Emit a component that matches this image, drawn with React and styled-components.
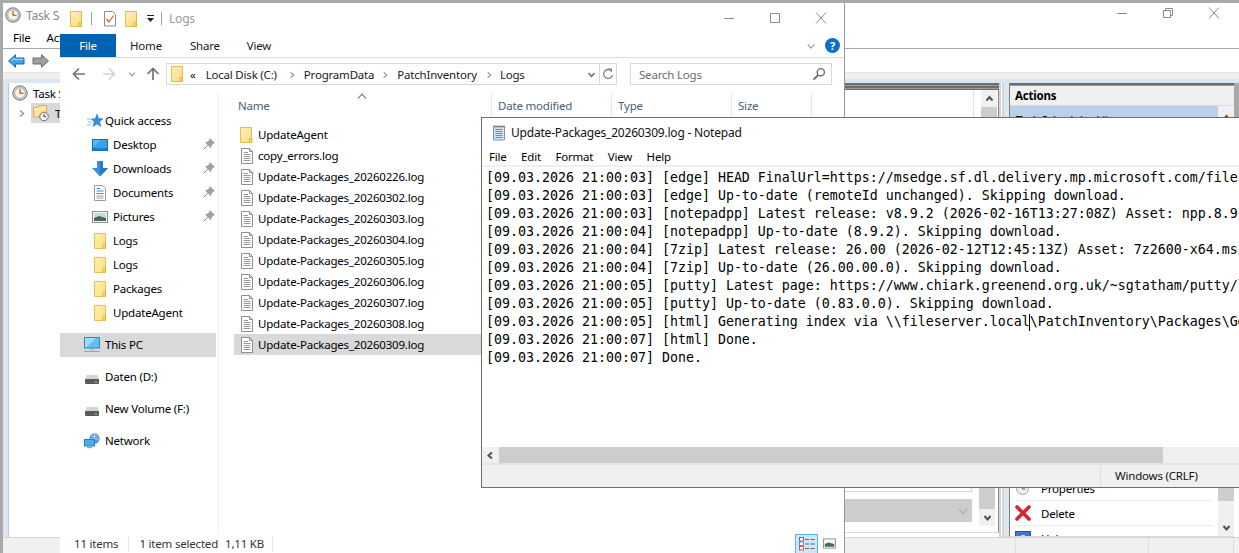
import React from 'react';
import styled, { createGlobalStyle } from 'styled-components';

const GlobalStyle = createGlobalStyle`
  html, body {
    margin: 0;
    padding: 0;
    background: #a9a9a9;
    overflow: hidden;
  }
  * {
    box-sizing: border-box;
  }
`;

const uiFont = `"Noto Sans", "Open Sans", sans-serif`;

const Desktop = styled.div`
  position: relative;
  width: 1239px;
  height: 553px;
  overflow: hidden;
  background: #a9a9a9;
  font-family: ${uiFont};
  font-size: 11.5px;
  letter-spacing: -0.2px;
  color: #000;
`;

/* ---------- Task Scheduler (back window) ---------- */

const SchedulerWindow = styled.div`
  position: absolute;
  left: 3px;
  top: 3px;
  width: 1236px;
  height: 550px;
  background: #fff;
  display: flex;
  flex-direction: column;
`;

const SchedulerTitle = styled.div`
  height: 24px;
  display: flex;
  align-items: center;
  padding-left: 2px;
  gap: 5px;
  color: #8a8a8a;
  font-size: 12px;
`;

const SchedulerMenu = styled.div`
  height: 22px;
  display: flex;
  align-items: center;
  gap: 16px;
  padding-left: 10px;
  border-bottom: 1px solid #a6a6a6;
`;

const SchedulerTools = styled.div`
  height: 23px;
  display: flex;
  align-items: center;
  gap: 7px;
  padding-left: 5px;
`;

const ToolSeparator = styled.span`
  width: 1px;
  height: 18px;
  margin-left: 5px;
  background: #a0a0a0;
`;

const LightStrip = styled.div`
  height: 7px;
  background: #f0f0f0;
  border-top: 1px solid #e3e3e3;
`;

const Workspace = styled.div`
  flex: 1;
  min-height: 0;
  display: flex;
  background: #dbe6f1;
  padding: 4px 0 0 5px;
`;

const TreePane = styled.div`
  width: 196px;
  background: #fff;
  flex: none;
  border-left: 1px solid #c8c8c8;
`;

const TreeRow = styled.div`
  height: 20px;
  display: flex;
  align-items: center;
  gap: 5px;
  padding-left: ${(p) => p.$indent}px;
`;

const TreeSelected = styled.span`
  display: flex;
  align-items: center;
  gap: 6px;
  height: 20px;
  flex: 1;
  padding-left: 2px;
  background: #d9d9d9;
`;

const CenterPane = styled.div`
  width: 800px;
  flex: none;
  display: flex;
  flex-direction: column;
  background: #fff;
  border-right: 5px double #d4d4d4;
`;

const Stripes = styled.div`
  height: ${(p) => p.$h}px;
  flex: none;
  background: repeating-linear-gradient(#6d6d6d 0 2px, #9a9a9a 2px 3px);
`;

const CenterBody = styled.div`
  flex: 1;
  min-height: 0;
  display: flex;
  flex-direction: column;
  border-right: 1px solid #8c8c8c;
  margin-bottom: 4px;
  border-bottom: 1px solid #dcdcdc;
`;

const UpperPane = styled.div`
  height: 200px;
  flex: none;
  display: flex;
`;

const ListColumn = styled.div`
  flex: 1;
  margin-right: 7px;
  border-right: 1px solid #e3e3e3;
`;

const LowerPane = styled.div`
  flex: 1;
  min-height: 0;
  display: flex;
  padding-bottom: 6px;
`;

const LowerContent = styled.div`
  flex: 1;
  display: flex;
  flex-direction: column;
  justify-content: flex-end;
  padding: 0 7px 4px 0;
`;

const GrayBox = styled.div`
  height: 5px;
  border: 1px solid #d8d8d8;
  border-top: none;
  background: #fff;
  margin-bottom: 7px;
`;

const GrayDropdown = styled.div`
  height: 23px;
  background: #cdcdcd;
  display: flex;
  align-items: center;
  justify-content: flex-end;
  padding-right: 3px;
`;

const VScroll = styled.div`
  width: 16px;
  flex: none;
  display: flex;
  flex-direction: column;
  background: #f0f0f0;
  margin-right: ${(p) => p.$right || 0}px;
`;

const ScrollButton = styled.div`
  height: ${(p) => p.$h || 17}px;
  flex: none;
  display: flex;
  align-items: center;
  justify-content: center;
`;

const ScrollThumb = styled.div`
  flex: 1;
  background: #cdcdcd;
  margin-bottom: ${(p) => p.$bottom || 0}px;
`;

const ActionsPane = styled.div`
  width: 225px;
  flex: none;
  margin-left: 5px;
  display: flex;
  flex-direction: column;
  background: #fff;
  border-left: 1px solid #7f7f7f;
  border-bottom: 1px solid #dcdcdc;
  overflow: hidden;
`;

const EdgeStrip = styled.div`
  flex: 1;
  background: linear-gradient(#a9a9a9 35px, #fff 35px);
`;

const ActionsHeader = styled.div`
  height: 20px;
  flex: none;
  background: #f0f0f0;
  font-weight: 700;
  display: flex;
  align-items: center;
  padding-left: 5px;
  border-bottom: 1px solid #d8d8d8;
`;

const ActionsBody = styled.div`
  flex: 1;
  min-height: 0;
  display: flex;
`;

const ActionsList = styled.div`
  flex: 1;
  min-width: 0;
  display: flex;
  flex-direction: column;
  overflow: hidden;
`;

const ActionsSelected = styled.div`
  height: 26px;
  flex: none;
  background: #b8d1e8;
  padding-left: 6px;
  display: flex;
  align-items: center;
`;

const ActionsSpacer = styled.div`
  flex: 1;
`;

const ActionRow = styled.div`
  height: 25px;
  flex: none;
  display: flex;
  align-items: center;
  gap: 10px;
  margin: 0 6px 0 5px;
  border-bottom: 1px solid #ececec;
  &:last-child {
    border-bottom: none;
    margin-bottom: -15px;
  }
`;

const SchedulerStatus = styled.div`
  height: 16px;
  flex: none;
  display: flex;
  justify-content: flex-end;
  background: #f0f0f0;
  border-top: 1px solid #d4d4d4;
  padding-right: 5px;
`;

const StatusCell = styled.div`
  width: ${(p) => p.$w}px;
  border-left: 1px solid #dcdcdc;
  &:last-child {
    border-right: 1px solid #dcdcdc;
  }
`;

const WindowControls = styled.div`
  position: absolute;
  top: ${(p) => p.$top}px;
  right: ${(p) => p.$right}px;
  display: flex;
  gap: 30px;
`;

/* ---------- Explorer ---------- */

const ExplorerWindow = styled.div`
  position: absolute;
  left: 60px;
  top: 3px;
  width: 785px;
  height: 550px;
  background: #fff;
  border-right: 1px solid #989898;
  display: flex;
  flex-direction: column;
`;

const ExplorerTitle = styled.div`
  height: 31px;
  flex: none;
  display: flex;
  align-items: center;
  padding-left: 10px;
`;

const TitleSeparator = styled.span`
  width: 1px;
  height: 13px;
  background: #a0a0a0;
  margin: 0 ${(p) => p.$after}px 0 ${(p) => p.$before}px;
`;

const TitleGap = styled.span`
  width: ${(p) => p.$w}px;
  flex: none;
`;

const FadedTitle = styled.span`
  color: #9a9a9a;
  font-size: 12px;
`;

const RibbonTabs = styled.div`
  position: relative;
  height: 24px;
  flex: none;
  display: flex;
  align-items: stretch;
  border-bottom: 1px solid #dadada;
`;

const FileTab = styled.div`
  width: 56px;
  height: 23px;
  background: #0063b1;
  color: #fff;
  display: flex;
  align-items: center;
  justify-content: center;
`;

const RibbonTab = styled.div`
  display: flex;
  align-items: center;
  height: 23px;
  margin-left: ${(p) => p.$left}px;
  color: #1a1a1a;
`;

const RibbonRight = styled.div`
  position: absolute;
  right: 4px;
  top: 4px;
  display: flex;
  align-items: center;
  gap: 9px;
`;

const HelpDot = styled.span`
  width: 15px;
  height: 15px;
  border-radius: 50%;
  background: #0a6fc9;
  color: #fff;
  font-weight: 700;
  font-size: 11px;
  letter-spacing: 0;
  display: flex;
  align-items: center;
  justify-content: center;
`;

const AddressRow = styled.div`
  height: 35px;
  flex: none;
  display: flex;
  align-items: center;
  padding: 0 12px 3px 12px;
`;

const NavSlot = styled.span`
  width: ${(p) => p.$w}px;
  flex: none;
  display: flex;
  align-items: center;
`;

const AddressBox = styled.div`
  width: 451px;
  height: 22px;
  flex: none;
  border: 1px solid #d9d9d9;
  display: flex;
  align-items: center;
  padding-left: 4px;
  color: #1a1a1a;
`;

const Crumb = styled.span`
  margin-left: ${(p) => p.$left || 0}px;
`;

const AddressEnd = styled.div`
  margin-left: auto;
  height: 100%;
  display: flex;
  align-items: center;
  gap: 3px;
`;

const RefreshCell = styled.span`
  width: 17px;
  height: 100%;
  display: flex;
  align-items: center;
  justify-content: center;
  border-left: 1px solid #d9d9d9;
`;

const SearchBox = styled.div`
  width: 202px;
  height: 22px;
  flex: none;
  margin-left: 13px;
  border: 1px solid #d9d9d9;
  display: flex;
  align-items: center;
  justify-content: space-between;
  padding: 0 5px 0 8px;
  color: #6d6d6d;
`;

const ExplorerMain = styled.div`
  flex: 1;
  min-height: 0;
  display: flex;
`;

const Sidebar = styled.div`
  width: 159px;
  flex: none;
  padding-top: 16px;
  border-right: 1px solid #f0f0f0;
  display: flex;
  flex-direction: column;
  gap: 8px;
`;

const NavGroup = styled.div`
  display: flex;
  flex-direction: column;
`;

const NavRow = styled.div`
  position: relative;
  height: 24px;
  display: flex;
  align-items: center;
  gap: ${(p) => p.$gap}px;
  padding-left: ${(p) => p.$indent}px;
  padding-bottom: 2px;
  margin-right: 2px;
  background: ${(p) => (p.$selected ? '#d9d9d9' : 'transparent')};
`;

const NavIcon = styled.span`
  width: 16px;
  flex: none;
  padding-top: 2px;
  display: flex;
  align-items: center;
  justify-content: center;
`;

const NavPin = styled.span`
  position: absolute;
  right: 1px;
  top: 5px;
  display: flex;
`;

const FilePane = styled.div`
  flex: 1;
  min-width: 0;
  display: flex;
  flex-direction: column;
`;

const HeaderRow = styled.div`
  height: 24px;
  flex: none;
  display: flex;
`;

const HeaderCell = styled.div`
  position: relative;
  width: ${(p) => p.$w}px;
  flex: none;
  padding-left: ${(p) => p.$pad}px;
  padding-top: 5px;
  color: #4c607a;
  border-right: 1px solid #e5e5e5;
`;

const SortCaret = styled.span`
  position: absolute;
  left: 137px;
  top: -3px;
  display: flex;
`;

const FileList = styled.div`
  padding: 7px 0 0 15px;
  display: flex;
  flex-direction: column;
`;

const FileRow = styled.div`
  height: 21px;
  width: 260px;
  display: flex;
  align-items: center;
  gap: 4px;
  padding-left: 6px;
  background: ${(p) => (p.$selected ? '#d9d9d9' : 'transparent')};
`;

const ExplorerStatus = styled.div`
  height: 20px;
  flex: none;
  display: flex;
  align-items: center;
  color: #333;
  padding-left: 14px;
  padding-top: 1px;
  position: relative;
`;

const StatusDivider = styled.span`
  width: 1px;
  height: 14px;
  background: #e3e3e3;
  margin: 0 ${(p) => p.$after}px 0 ${(p) => p.$before}px;
`;

const ViewButtons = styled.div`
  margin-left: auto;
  margin-right: 7px;
  height: 20px;
  display: flex;
  align-items: center;
  gap: 4px;
`;

const ViewButton = styled.span`
  width: ${(p) => p.$w}px;
  height: 20px;
  display: flex;
  align-items: center;
  justify-content: center;
  background: ${(p) => (p.$active ? '#cce8ff' : 'transparent')};
  border: 1px solid ${(p) => (p.$active ? '#58b4e4' : 'transparent')};
`;

/* ---------- Notepad (front window) ---------- */

const NotepadWindow = styled.div`
  position: absolute;
  left: 481px;
  top: 117px;
  width: 760px;
  height: 371px;
  background: #fff;
  border: 1px solid #6e6e6e;
  display: flex;
  flex-direction: column;
`;

const NotepadTitle = styled.div`
  height: 29px;
  flex: none;
  display: flex;
  align-items: center;
  gap: 4px;
  padding-left: 9px;
  font-size: 12px;
  color: #111;
`;

const NotepadMenu = styled.div`
  height: 20px;
  flex: none;
  display: flex;
  align-items: center;
  gap: 14.5px;
  padding-left: 7px;
  border-bottom: 2px solid #f0f0f0;
`;

const TextArea = styled.div`
  position: relative;
  flex: 1;
  min-height: 0;
  padding: 2px 0 0 4px;
  overflow: hidden;
`;

const LogLine = styled.div`
  height: 18px;
  line-height: 18px;
  font-family: "DejaVu Sans Mono", "Liberation Mono", monospace;
  font-size: 13.29px;
  letter-spacing: 0;
  white-space: pre;
  color: #000;
`;

const TextCursor = styled.span`
  position: absolute;
  left: 547px;
  top: 147px;
  width: 1px;
  height: 17px;
  background: #000;
`;

const HScroll = styled.div`
  height: 16px;
  flex: none;
  display: flex;
  background: #f0f0f0;
`;

const HScrollButton = styled.div`
  width: 17px;
  display: flex;
  align-items: center;
  justify-content: center;
`;

const HScrollThumb = styled.div`
  width: 664px;
  background: #cdcdcd;
`;

const NotepadStatus = styled.div`
  height: 24px;
  flex: none;
  display: flex;
  justify-content: flex-end;
  background: #f0f0f0;
  border-top: 2px solid #e4e4e4;
`;

const NotepadStatusCell = styled.div`
  width: 140px;
  flex: none;
  height: 20px;
  margin-top: 1px;
  padding: 0 0 2px 14px;
  border-left: 1px solid #dcdcdc;
  display: flex;
  align-items: center;
  color: #111;
`;

/* ---------- Icons ---------- */

const FolderIcon = () => (
  <svg width="14" height="16" viewBox="0 0 14 16">
    <defs>
      <linearGradient id="folderFill" x1="0" y1="0" x2="1" y2="1">
        <stop offset="0" stopColor="#fff0b8" />
        <stop offset="1" stopColor="#fbdc7c" />
      </linearGradient>
    </defs>
    <path d="M.5 .5H11.5V15.5H.5Z" fill="url(#folderFill)" stroke="#e6bd52" />
    <path d="M9.5 11.5H12V15.5H9.5Z" fill="#f7d56c" stroke="#dcae40" strokeWidth=".8" />
  </svg>
);

const SmallFolderIcon = () => (
  <svg width="12" height="16" viewBox="0 0 12 16">
    <path d="M.5 .5H11.5V15.5H.5Z" fill="url(#folderFill)" stroke="#e6bd52" />
    <path d="M9 11.5H11.5V15.5H9Z" fill="#f7d56c" stroke="#dcae40" strokeWidth=".8" />
  </svg>
);

const DocIcon = () => (
  <svg width="14" height="16" viewBox="0 0 14 16">
    <path d="M1.5 .5H9.5L12.5 3.5V15.5H1.5Z" fill="#fff" stroke="#8f8f8f" />
    <path d="M9.5 .5V3.5H12.5" fill="none" stroke="#8f8f8f" />
    <path d="M3.5 4.5H8M3.5 6.5H10.5M3.5 8.5H10.5M3.5 10.5H10.5M3.5 12.5H10.5" stroke="#9a9a9a" />
  </svg>
);

const ClockIcon = ({ size = 16 }) => (
  <svg width={size} height={size} viewBox="0 0 16 16">
    <circle cx="8" cy="8" r="7.2" fill="#c9ccd2" stroke="#77797f" />
    <circle cx="8" cy="8" r="5.2" fill="#fbf3dc" stroke="#9a9a9a" strokeWidth=".6" />
    <path d="M8 4V8.3H11.5" fill="none" stroke="#7a5c2c" strokeWidth="1.1" />
  </svg>
);

const FolderClockIcon = () => (
  <svg width="16" height="18" viewBox="0 0 16 18">
    <path d="M.5 3.5H5L6 1.5H13.5V13H.5Z" fill="#fbe39a" stroke="#d6ae52" />
    <path d="M1 5H13" stroke="#fff6d0" />
    <circle cx="11" cy="12.5" r="4.3" fill="#eef0f2" stroke="#6d7078" />
    <path d="M11 10V12.7H13" fill="none" stroke="#444" />
  </svg>
);

const BlueArrow = () => (
  <svg width="17" height="14" viewBox="0 0 17 14">
    <path d="M.5 7L7.5 .7V4H16V10H7.5V13.3Z" fill="#3ea2e8" stroke="#1b6fb5" />
    <path d="M3 7L7 4V5.5H15" fill="none" stroke="#a6dcfb" />
  </svg>
);

const GrayArrow = () => (
  <svg width="17" height="14" viewBox="0 0 17 14">
    <path d="M16.5 7L9.5 .7V4H1V10H9.5V13.3Z" fill="#a0a0a0" stroke="#6a6a6a" />
  </svg>
);

const Chevron = ({ dir = 'up', color = '#505050', size = 9, weight = 2 }) => {
  const d = {
    up: 'M1.5 6.5L4.5 3L7.5 6.5',
    down: 'M1.5 3L4.5 6.5L7.5 3',
    left: 'M6 1.5L2.5 4.5L6 7.5',
    right: 'M3 1.5L6.5 4.5L3 7.5',
  }[dir];
  return (
    <svg width={size} height={size} viewBox="0 0 9 9">
      <path d={d} fill="none" stroke={color} strokeWidth={weight} />
    </svg>
  );
};

const MinIcon = () => (
  <svg width="16" height="12" viewBox="0 0 16 12">
    <path d="M3 6.5H13" stroke="#8c8c8c" />
  </svg>
);

const MaxIcon = () => (
  <svg width="16" height="12" viewBox="0 0 16 12">
    <path d="M3.5 1.5H12.5V10.5H3.5Z" fill="none" stroke="#8c8c8c" />
  </svg>
);

const RestoreIcon = () => (
  <svg width="16" height="12" viewBox="0 0 16 12">
    <path d="M3.5 3.5H10.5V10.5H3.5ZM5.5 3.5V1.5H12.5V8.5H10.5" fill="none" stroke="#8c8c8c" />
  </svg>
);

const CloseIcon = () => (
  <svg width="16" height="12" viewBox="0 0 16 12">
    <path d="M3 .5L13 11.5M13 .5L3 11.5" stroke="#8c8c8c" />
  </svg>
);

const CheckDocIcon = () => (
  <svg width="14" height="17" viewBox="0 0 14 17">
    <path d="M1.5 1.5H9.5L12.5 4.5V16H1.5Z" fill="#fff" stroke="#8c8c8c" />
    <path d="M3.5 9L6 12L10.5 5.5" fill="none" stroke="#d9622b" strokeWidth="1.3" />
  </svg>
);

const QatDropdown = () => (
  <svg width="9" height="9" viewBox="0 0 9 9">
    <path d="M1 1.5H8" stroke="#222" />
    <path d="M1 4H8L4.5 8Z" fill="#222" />
  </svg>
);

const NavArrow = ({ flip, color }) => (
  <svg width="14" height="14" viewBox="0 0 14 14" style={flip ? { transform: 'scaleX(-1)' } : undefined}>
    <path d="M13 7H2M7 1.5L1.5 7L7 12.5" fill="none" stroke={color} strokeWidth="1.7" />
  </svg>
);

const UpArrow = () => (
  <svg width="14" height="14" viewBox="0 0 14 14">
    <path d="M7 13V2M1.5 7L7 1.5L12.5 7" fill="none" stroke="#737373" strokeWidth="1.7" />
  </svg>
);

const RefreshIcon = () => (
  <svg width="12" height="14" viewBox="0 0 12 14">
    <path d="M9.5 4A4.5 4.5 0 1 0 10.5 8" fill="none" stroke="#777" strokeWidth="1.2" />
    <path d="M6 1.5L9.8 1.5V5.2Z" fill="#777" />
  </svg>
);

const SearchIcon = () => (
  <svg width="14" height="14" viewBox="0 0 14 14">
    <circle cx="8.8" cy="5.2" r="3.6" fill="none" stroke="#6d6d6d" strokeWidth="1.4" />
    <path d="M6.2 8L1.5 12.7" stroke="#6d6d6d" strokeWidth="1.8" />
  </svg>
);

const StarIcon = () => (
  <svg width="16" height="16" viewBox="0 0 16 16">
    <path d="M10 1L11.6 5.6L16 5.8L12.6 8.8L14 13.6L10 10.9L6 13.6L7.2 8.8L4.2 6L8.4 5.6Z" fill="#2f8fe0" stroke="#1f74c4" strokeWidth=".5" />
    <path d="M0 6H4M1 9H5M0 12H4" stroke="#7cc0f2" />
  </svg>
);

const DesktopIcon = () => (
  <svg width="16" height="12" viewBox="0 0 16 12">
    <rect x=".5" y=".5" width="15" height="11" fill="#33a3ee" stroke="#0e6fbe" />
    <path d="M1 10H15" stroke="#0e5fa8" />
    <path d="M1 8L9 1H1Z" fill="#58bbf6" />
  </svg>
);

const DownloadIcon = () => (
  <svg width="16" height="16" viewBox="0 0 16 16">
    <path d="M5 0H11V7H16L8 15.5L0 7H5Z" fill="#3b8fe0" />
    <path d="M8 0H11V7H16L8 15.5Z" fill="#2a78cb" />
  </svg>
);

const DocumentsIcon = () => (
  <svg width="12" height="16" viewBox="0 0 12 16">
    <path d="M.5 .5H8.5L11.5 3.5V15.5H.5Z" fill="#fff" stroke="#9a9a9a" />
    <path d="M2.5 3.5H6M2.5 6H9.5M2.5 8.5H9.5" stroke="#3d8ed6" />
    <path d="M2.5 11H9.5M2.5 13H9.5" stroke="#9a9a9a" />
  </svg>
);

const PicturesIcon = () => (
  <svg width="16" height="12" viewBox="0 0 16 12">
    <rect x=".5" y=".5" width="15" height="11" fill="#f4f6f8" stroke="#8f8f8f" />
    <rect x="2" y="2" width="12" height="8" fill="#c4dbe8" />
    <path d="M2 7L7 5L14 7V10H2Z" fill="#4a6b4e" />
  </svg>
);

const PinIcon = () => (
  <svg width="12" height="12" viewBox="0 0 12 12">
    <path d="M7 .5L11.5 5L9.8 5.6L7.8 8.6L7.6 10L2.6 4.6L4 4.2L6.6 2.2Z" fill="#9aa0a6" stroke="#84898f" strokeWidth=".5" />
    <path d="M4.5 7.5L.8 11.2" stroke="#84898f" />
  </svg>
);

const ThisPcIcon = () => (
  <svg width="16" height="16" viewBox="0 0 16 16">
    <rect x=".5" y=".5" width="15" height="10.5" fill="#5cc0f5" stroke="#3a84b8" />
    <path d="M1 1H12L3 10H1Z" fill="#9adcfb" />
    <path d="M6 11.5H10V13H6Z" fill="#9fb4c4" />
    <path d="M0 14.5H16" stroke="#8aa7bf" />
  </svg>
);

const DriveIcon = () => (
  <svg width="14" height="16" viewBox="0 0 14 16">
    <path d="M1.5 6H12.5L14 10H0Z" fill="#d4d4d4" />
    <rect x="0" y="10" width="14" height="5" rx="1" fill="#5a5a5a" />
    <rect x="10" y="12" width="2" height="1.5" fill="#5fd35f" />
  </svg>
);

const NetworkIcon = () => (
  <svg width="16" height="16" viewBox="0 0 16 16">
    <circle cx="10.5" cy="5.5" r="5.2" fill="#5d9bd6" />
    <path d="M7 2.5C9 4 12 4 14.5 2.5M6 6H15M10.5 .5V10.5" stroke="#cfe5f7" strokeWidth=".7" fill="none" />
    <rect x=".5" y="6.5" width="10" height="6.5" fill="#42b0ee" stroke="#2b7eb8" />
    <path d="M3 14.5H8" stroke="#8aa7bf" strokeWidth="1.4" />
  </svg>
);

const DeleteIcon = () => (
  <svg width="16" height="16" viewBox="0 0 16 16">
    <path d="M2 2L14 14M14 2L2 14" stroke="#d7262c" strokeWidth="3.6" strokeLinecap="round" />
  </svg>
);

const PropertiesIcon = () => (
  <svg width="16" height="16" viewBox="0 0 16 16">
    <circle cx="7.5" cy="8.5" r="6" fill="#eef0f2" stroke="#a0a4aa" />
    <path d="M8 1H14V8H8Z" fill="#f3dc9b" />
    <path d="M7.5 5V9H10.5" fill="none" stroke="#666" />
  </svg>
);

const HelpBookIcon = () => (
  <svg width="16" height="16" viewBox="0 0 16 16">
    <rect x=".5" y=".5" width="15" height="15" fill="#3f74d0" stroke="#2a55a5" />
    <circle cx="8" cy="7" r="3" fill="#dfe9fa" />
  </svg>
);

const NotepadIcon = () => (
  <svg width="16" height="17" viewBox="0 0 16 17">
    <path d="M2.5 2.5H13.5V16H2.5Z" fill="#cfe4f2" stroke="#7d95a8" />
    <path d="M4.5 5.5H11.5M4.5 7.5H11.5M4.5 9.5H11.5M4.5 11.5H11.5M4.5 13.5H11.5" stroke="#5f93b8" />
    <path d="M3 1.5V3.5M5 1.5V3.5M7 1.5V3.5M9 1.5V3.5M11 1.5V3.5M13 1.5V3.5" stroke="#6e6e6e" />
  </svg>
);

const DetailsViewIcon = () => (
  <svg width="16" height="14" viewBox="0 0 16 14">
    <rect x=".5" y=".5" width="4" height="3.5" fill="#fff" stroke="#555" strokeWidth=".8" />
    <rect x=".5" y="5" width="4" height="3.5" fill="#fff" stroke="#3a7ac0" strokeWidth=".8" />
    <rect x=".5" y="9.5" width="4" height="3.5" fill="#fff" stroke="#c0392b" strokeWidth=".8" />
    <path d="M6 2.5H10M11.5 2.5H15.5M6 7H10M11.5 7H15.5M6 11.5H10M11.5 11.5H15.5" stroke="#666" />
  </svg>
);

const LargeViewIcon = () => (
  <svg width="14" height="11" viewBox="0 0 14 11">
    <rect x=".5" y=".5" width="13" height="10" fill="#eef3f6" stroke="#8f8f8f" />
    <path d="M2 6L6 4.5L12 6V9H2Z" fill="#4a6b4e" />
  </svg>
);

/* ---------- Data ---------- */

const quickLinks = [
  { name: 'Desktop', icon: <DesktopIcon />, pinned: true },
  { name: 'Downloads', icon: <DownloadIcon />, pinned: true },
  { name: 'Documents', icon: <DocumentsIcon />, pinned: true },
  { name: 'Pictures', icon: <PicturesIcon />, pinned: true },
  { name: 'Logs', icon: <SmallFolderIcon /> },
  { name: 'Logs', icon: <SmallFolderIcon /> },
  { name: 'Packages', icon: <SmallFolderIcon /> },
  { name: 'UpdateAgent', icon: <SmallFolderIcon /> },
];

const files = [
  'copy_errors.log',
  'Update-Packages_20260226.log',
  'Update-Packages_20260302.log',
  'Update-Packages_20260303.log',
  'Update-Packages_20260304.log',
  'Update-Packages_20260305.log',
  'Update-Packages_20260306.log',
  'Update-Packages_20260307.log',
  'Update-Packages_20260308.log',
  'Update-Packages_20260309.log',
];

const logLines = [
  '[09.03.2026 21:00:03] [edge] HEAD FinalUrl=https://msedge.sf.dl.delivery.mp.microsoft.com/filestreamingservice',
  '[09.03.2026 21:00:03] [edge] Up-to-date (remoteId unchanged). Skipping download.',
  '[09.03.2026 21:00:03] [notepadpp] Latest release: v8.9.2 (2026-02-16T13:27:08Z) Asset: npp.8.9.2.Installer.x64',
  '[09.03.2026 21:00:04] [notepadpp] Up-to-date (8.9.2). Skipping download.',
  '[09.03.2026 21:00:04] [7zip] Latest release: 26.00 (2026-02-12T12:45:13Z) Asset: 7z2600-x64.msi',
  '[09.03.2026 21:00:04] [7zip] Up-to-date (26.00.00.0). Skipping download.',
  '[09.03.2026 21:00:05] [putty] Latest page: https://www.chiark.greenend.org.uk/~sgtatham/putty/latest.html',
  '[09.03.2026 21:00:05] [putty] Up-to-date (0.83.0.0). Skipping download.',
  '[09.03.2026 21:00:05] [html] Generating index via \\\\fileserver.local\\PatchInventory\\Packages\\Generated',
  '[09.03.2026 21:00:07] [html] Done.',
  '[09.03.2026 21:00:07] Done.',
];

function Scheduler() {
  return (
    <SchedulerWindow>
      <SchedulerTitle>
        <ClockIcon />
        Task Scheduler
      </SchedulerTitle>
      <SchedulerMenu>
        <span>File</span>
        <span>Action</span>
      </SchedulerMenu>
      <SchedulerTools>
        <BlueArrow />
        <GrayArrow />
        <ToolSeparator />
      </SchedulerTools>
      <LightStrip />
      <Workspace>
        <TreePane>
          <TreeRow $indent={3}>
            <ClockIcon />
            Task Scheduler
          </TreeRow>
          <TreeRow $indent={8}>
            <Chevron dir="right" color="#9a9a9a" size={9} weight={1.6} />
            <TreeSelected>
              <FolderClockIcon />
              Task Scheduler Library
            </TreeSelected>
          </TreeRow>
        </TreePane>
        <CenterPane>
          <Stripes $h={7} />
          <CenterBody>
            <UpperPane>
              <ListColumn />
              <VScroll $right={1}>
                <ScrollButton>
                  <Chevron dir="up" />
                </ScrollButton>
                <ScrollThumb />
              </VScroll>
            </UpperPane>
            <LowerPane>
              <LowerContent>
                <GrayBox />
                <GrayDropdown>
                  <Chevron dir="down" color="#b0b0b0" size={12} weight={1} />
                </GrayDropdown>
              </LowerContent>
              <VScroll $right={3}>
                <ScrollThumb />
                <ScrollButton>
                  <Chevron dir="down" />
                </ScrollButton>
              </VScroll>
            </LowerPane>
          </CenterBody>
        </CenterPane>
        <ActionsPane>
          <Stripes $h={3} />
          <ActionsHeader>Actions</ActionsHeader>
          <ActionsBody>
            <ActionsList>
              <ActionsSelected>Task Scheduler Library</ActionsSelected>
              <ActionsSpacer />
              <ActionRow>
                <PropertiesIcon />
                Properties
              </ActionRow>
              <ActionRow>
                <DeleteIcon />
                Delete
              </ActionRow>
              <ActionRow>
                <HelpBookIcon />
                Help
              </ActionRow>
            </ActionsList>
            <VScroll>
              <ScrollButton $h={22}>
                <Chevron dir="up" />
              </ScrollButton>
              <ScrollThumb $bottom={18} />
              <ScrollButton>
                <Chevron dir="down" />
              </ScrollButton>
            </VScroll>
          </ActionsBody>
        </ActionsPane>
        <EdgeStrip />
      </Workspace>
      <SchedulerStatus>
        <StatusCell $w={133} />
        <StatusCell $w={86} />
      </SchedulerStatus>
      <WindowControls $top={4} $right={17}>
        <MinIcon />
        <RestoreIcon />
        <CloseIcon />
      </WindowControls>
    </SchedulerWindow>
  );
}

function Explorer() {
  return (
    <ExplorerWindow>
      <ExplorerTitle>
        <SmallFolderIcon />
        <TitleSeparator $before={9} $after={11} />
        <CheckDocIcon />
        <TitleGap $w={8} />
        <SmallFolderIcon />
        <TitleGap $w={9} />
        <QatDropdown />
        <TitleSeparator $before={6} $after={7} />
        <FadedTitle>Logs</FadedTitle>
      </ExplorerTitle>
      <WindowControls $top={9} $right={15}>
        <MinIcon />
        <MaxIcon />
        <CloseIcon />
      </WindowControls>
      <RibbonTabs>
        <FileTab>File</FileTab>
        <RibbonTab $left={14}>Home</RibbonTab>
        <RibbonTab $left={28}>Share</RibbonTab>
        <RibbonTab $left={27}>View</RibbonTab>
        <RibbonRight>
          <Chevron dir="down" color="#9a9a9a" size={10} weight={1} />
          <HelpDot>?</HelpDot>
        </RibbonRight>
      </RibbonTabs>
      <AddressRow>
        <NavSlot $w={30}>
          <NavArrow color="#737373" />
        </NavSlot>
        <NavSlot $w={26}>
          <NavArrow flip color="#d4d4d4" />
        </NavSlot>
        <NavSlot $w={18}>
          <Chevron dir="down" color="#9a9a9a" size={8} weight={1.3} />
        </NavSlot>
        <NavSlot $w={20}>
          <UpArrow />
        </NavSlot>
        <AddressBox>
          <SmallFolderIcon />
          <Crumb $left={7}>«</Crumb>
          <Crumb $left={10}>Local Disk (C:)</Crumb>
          <Crumb $left={11}><Chevron dir="right" color="#8a8a8a" size={8} weight={1.2} /></Crumb>
          <Crumb $left={8}>ProgramData</Crumb>
          <Crumb $left={7}><Chevron dir="right" color="#8a8a8a" size={8} weight={1.2} /></Crumb>
          <Crumb $left={8}>PatchInventory</Crumb>
          <Crumb $left={8}><Chevron dir="right" color="#8a8a8a" size={8} weight={1.2} /></Crumb>
          <Crumb $left={7}>Logs</Crumb>
          <AddressEnd>
            <Chevron dir="down" color="#6a6a6a" size={9} weight={1.4} />
            <RefreshCell>
              <RefreshIcon />
            </RefreshCell>
          </AddressEnd>
        </AddressBox>
        <SearchBox>
          Search Logs
          <SearchIcon />
        </SearchBox>
      </AddressRow>
      <ExplorerMain>
        <Sidebar>
          <NavGroup>
            <NavRow $indent={27} $gap={2}>
              <NavIcon>
                <StarIcon />
              </NavIcon>
              Quick access
            </NavRow>
            {quickLinks.map((link, index) => (
              <NavRow key={index} $indent={32} $gap={5}>
                <NavIcon>{link.icon}</NavIcon>
                {link.name}
                {link.pinned && (
                  <NavPin>
                    <PinIcon />
                  </NavPin>
                )}
              </NavRow>
            ))}
          </NavGroup>
          <NavRow $indent={24} $gap={5} $selected>
            <NavIcon>
              <ThisPcIcon />
            </NavIcon>
            This PC
          </NavRow>
          <NavRow $indent={24} $gap={5}>
            <NavIcon>
              <DriveIcon />
            </NavIcon>
            Daten (D:)
          </NavRow>
          <NavRow $indent={24} $gap={5}>
            <NavIcon>
              <DriveIcon />
            </NavIcon>
            New Volume (F:)
          </NavRow>
          <NavRow $indent={24} $gap={5}>
            <NavIcon>
              <NetworkIcon />
            </NavIcon>
            Network
          </NavRow>
        </Sidebar>
        <FilePane>
          <HeaderRow>
            <HeaderCell $w={273} $pad={19}>
              Name
              <SortCaret>
                <Chevron dir="up" color="#8a8a8a" size={12} weight={1} />
              </SortCaret>
            </HeaderCell>
            <HeaderCell $w={120} $pad={6}>Date modified</HeaderCell>
            <HeaderCell $w={120} $pad={6}>Type</HeaderCell>
            <HeaderCell $w={80} $pad={6}>Size</HeaderCell>
          </HeaderRow>
          <FileList>
            <FileRow>
              <FolderIcon />
              UpdateAgent
            </FileRow>
            {files.map((file) => (
              <FileRow key={file} $selected={file.endsWith('20260309.log')}>
                <DocIcon />
                {file}
              </FileRow>
            ))}
          </FileList>
        </FilePane>
      </ExplorerMain>
      <ExplorerStatus>
        11 items
        <StatusDivider $before={10} $after={10} />
        1 item selected
        <TitleGap $w={7} />
        1,11 KB
        <StatusDivider $before={8} $after={0} />
        <ViewButtons>
          <ViewButton $w={23} $active>
            <DetailsViewIcon />
          </ViewButton>
          <ViewButton $w={15}>
            <LargeViewIcon />
          </ViewButton>
        </ViewButtons>
      </ExplorerStatus>
    </ExplorerWindow>
  );
}

function Notepad() {
  return (
    <NotepadWindow>
      <NotepadTitle>
        <NotepadIcon />
        Update-Packages_20260309.log - Notepad
      </NotepadTitle>
      <NotepadMenu>
        <span>File</span>
        <span>Edit</span>
        <span>Format</span>
        <span>View</span>
        <span>Help</span>
      </NotepadMenu>
      <TextArea>
        {logLines.map((line, index) => (
          <LogLine key={index}>{line}</LogLine>
        ))}
        <TextCursor />
      </TextArea>
      <HScroll>
        <HScrollButton>
          <Chevron dir="left" />
        </HScrollButton>
        <HScrollThumb />
      </HScroll>
      <NotepadStatus>
        <NotepadStatusCell>Windows (CRLF)</NotepadStatusCell>
      </NotepadStatus>
    </NotepadWindow>
  );
}

export default function App() {
  return (
    <Desktop>
      <GlobalStyle />
      <Scheduler />
      <Explorer />
      <Notepad />
    </Desktop>
  );
}
